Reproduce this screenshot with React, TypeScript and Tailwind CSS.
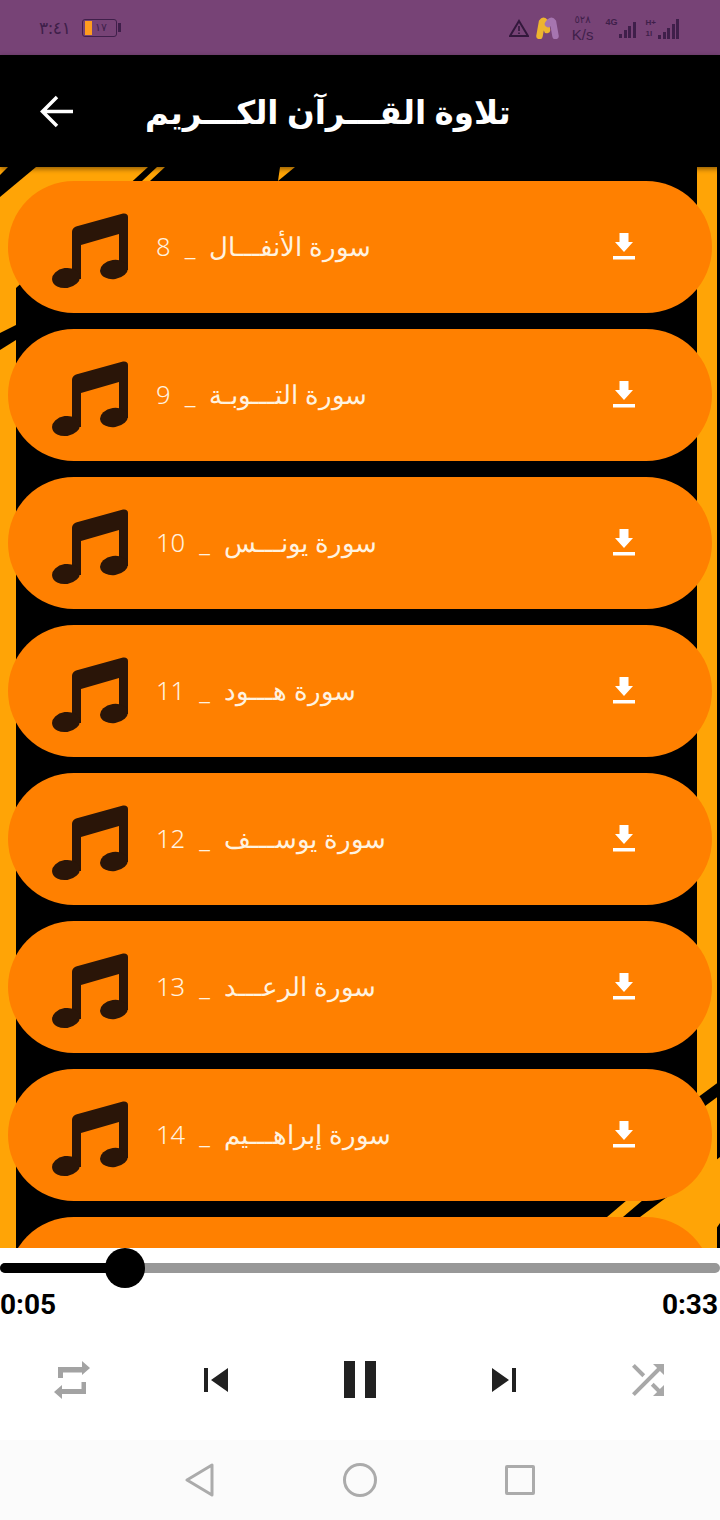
import React from 'react';

const arabicFont = "font-['Noto_Sans','Noto_Sans_CJK_SC','DejaVu_Sans',sans-serif]";

const tracks = [
  { name: 'سورة الأنفـــال', num: 8 },
  { name: 'سورة التـــوبـة', num: 9 },
  { name: 'سورة يونـــس', num: 10 },
  { name: 'سورة هـــود', num: 11 },
  { name: 'سورة يوســـف', num: 12 },
  { name: 'سورة الرعـــد', num: 13 },
  { name: 'سورة إبراهـــيم', num: 14 },
];

const NoteIcon = () => (
  <svg width="76" height="76" viewBox="0 0 76 76" fill="#2a1508" className="shrink-0 mt-[7px]">
    <path d="M20 19 Q20 15 24 13.5 L71 0.5 Q76 0 76 4 V57 H67 V21 L29 32 V66 H20 Z" />
    <ellipse cx="62" cy="56.5" rx="14" ry="9.5" transform="rotate(-8 62 56.5)" />
    <ellipse cx="14" cy="65" rx="14" ry="10" transform="rotate(-8 14 65)" />
  </svg>
);

const TrackRow = ({ name, num }: { name: string; num: number }) => (
  <div className="h-[132px] shrink-0 rounded-[66px] bg-[#ff8000] flex items-center pl-[44px] pr-[76px]">
    <NoteIcon />
    <div dir="rtl" className={`ml-[28px] flex-1 flex items-center text-[25.6px] text-[#fff3e0] ${arabicFont} font-light`}>
      <div dir="rtl" className="mr-auto whitespace-pre">
        <span>{name}</span>
        <span className="mx-[14px]">_</span>
        <span>{num}</span>
      </div>
    </div>
    <div className="w-[24px] flex flex-col items-center">
      <svg width="24" height="28" viewBox="0 0 24 28" fill="white">
        <path d="M7.5 0 H16.5 V9 H21 L12 19 L3 9 H7.5 Z" />
        <rect x="1" y="23" width="22" height="3.5" />
      </svg>
    </div>
  </div>
);

// artwork behind the list, drawn in page coordinates
const BackgroundArt = () => (
  <svg className="absolute inset-0 w-full h-full" viewBox="0 167 720 1081" preserveAspectRatio="none">
    <rect x="0" y="167" width="720" height="1081" fill="#000" />
    <rect x="0" y="167" width="16" height="1081" fill="#ffa406" />
    <rect x="697" y="167" width="20" height="1081" fill="#ffa406" />
    <path d="M0 167 H148 L16 288 H0 Z" fill="#ffa406" />
    <path d="M8 167 H36 L0 197 V175 Z" fill="#000" />
    <path d="M0 333 L16 325 V340 L0 350 Z" fill="#000" />
    <path d="M157 167 H165 L150 181 H142 Z" fill="#ffa406" />
    <path d="M280 167 H295 L278 181 Z" fill="#ffa406" />
    <path d="M697 1098 L720 1081 V1095 L697 1112 Z" fill="#000" />
    <path d="M720 1157 V1223 L703 1248 H640 V1217 L663 1200 L697 1175 Z" fill="#ffa406" />
    <path d="M627 1200 H643 L623 1217 H607 Z" fill="#ffa406" />
  </svg>
);

function Bars({ heights }: { heights: number[] }) {
  return (
    <div className="flex items-end gap-[1.5px] h-[20px]">
      {heights.map((h, i) => (
        <div key={i} className="w-[3px] bg-[#3f1f4a]" style={{ height: h }} />
      ))}
    </div>
  );
}

export default function App() {
  return (
    <div className="w-[720px] h-[1520px] flex flex-col bg-white overflow-hidden font-['Liberation_Sans',sans-serif]">
      {/* status bar */}
      <div className="h-[55px] shrink-0 bg-[#774376] flex items-center justify-between pl-[39px] pr-[41px] text-[#3f1f4a]">
        <div className="flex items-center gap-[11px]">
          <span className={`text-[17px] ${arabicFont}`}>٣:٤١</span>
          <div className="flex items-center gap-[1px]">
            <div className="w-[35px] h-[18px] border border-[#3f1f4a] rounded-[3px] flex items-center pl-[2px]">
              <div className="w-[7px] h-[14px] bg-[#ff9c1e]" />
              <span className="text-[11px] leading-none ml-[3px]">١٧</span>
            </div>
            <div className="w-[3px] h-[9px] bg-[#3f1f4a]" />
          </div>
        </div>
        <div className="flex items-center">
          <svg width="20" height="18" viewBox="0 0 20 18" fill="none" stroke="#33183c" strokeWidth="2">
            <path d="M10 2 L19 17 H1 Z" />
            <path d="M10 7 V12 M10 13.5 V15" strokeWidth="1.6" />
          </svg>
          <svg width="23" height="22" viewBox="0 0 23 22" className="ml-[7px] blur-[0.5px]" fill="none" strokeWidth="6.5" strokeLinecap="round">
            <path d="M3.5 19 L6 5 Q8 2 10 7 L11 13" stroke="#eeb52f" />
            <path d="M12 7 Q15 2 17 5 L19.5 19" stroke="#a675b0" />
          </svg>
          <div className="ml-[13px] w-[22px] flex flex-col items-center leading-none">
            <span className={`text-[10px] ${arabicFont}`}>٥٢٨</span>
            <span className="text-[15px] mt-[3px]">K/s</span>
          </div>
          <div className="ml-[12px] w-[30px] flex items-end justify-between">
            <span className="text-[9px] font-bold self-start mt-[-2px]">4G</span>
            <Bars heights={[4, 8, 12, 16]} />
          </div>
          <div className="ml-[10px] flex items-end gap-[2px]">
            <div className="flex flex-col text-[8px] font-bold leading-[11px]">
              <span>H+</span>
              <span>1l</span>
            </div>
            <Bars heights={[4, 7, 11, 15, 20]} />
          </div>
        </div>
      </div>

      {/* app bar */}
      <div className="relative z-10 h-[112px] shrink-0 bg-black flex items-center pl-[40px] text-white shadow-[0_2px_5px_rgba(0,0,0,0.45)]">
        <svg width="33" height="33" viewBox="0 0 33 33" fill="none" stroke="white" strokeWidth="3.5" className="shrink-0">
          <path d="M33 16.5 H3 M17 2 L2.5 16.5 L17 31" />
        </svg>
        <h1 dir="rtl" className={`ml-[72px] pt-[2px] text-[32.5px] font-bold whitespace-pre leading-none ${arabicFont}`}>تلاوة القـــرآن الكـــريم</h1>
      </div>

      {/* list */}
      <div className="relative flex-1 overflow-hidden">
        <BackgroundArt />
        <div className="relative flex flex-col gap-[16px] pt-[14px] px-[8px]">
          {tracks.map((t) => (
            <TrackRow key={t.num} name={t.name} num={t.num} />
          ))}
          <div className="h-[132px] shrink-0 rounded-[66px] bg-[#ff8000]" />
        </div>
      </div>

      {/* player */}
      <div className="h-[272px] shrink-0 flex flex-col bg-white">
        <div className="relative h-[40px] shrink-0 flex items-center">
          <div className="w-full h-[10px] rounded-full bg-[#989898]" />
          <div className="absolute left-0 w-[125px] h-[10px] rounded-full bg-black" />
          <div className="absolute left-[105px] w-[40px] h-[40px] rounded-full bg-black" />
        </div>
        <div className="flex justify-between pr-[2px] mt-[1px] text-[28px] font-bold leading-[32px] text-black font-['Roboto',sans-serif]">
          <span>0:05</span>
          <span>0:33</span>
        </div>
        <div className="mt-[35px] h-[48px] flex items-center justify-between px-[48px]">
          <svg width="48" height="48" viewBox="-6 -5 48 48" fill="#a3a3a3">
            <path d="M4 6 H28 V0 L36 7 L28 14 V11.5 H9 V17 H4 Z" />
            <path d="M32 33 H8 V38 L0 31 L8 24 V28 H27.5 V21 H32 Z" />
          </svg>
          <svg width="48" height="48" viewBox="0 0 24 24" fill="#212121"><path d="M6 6h2v12H6zm3.5 6l8.5 6V6z" /></svg>
          <svg width="48" height="48" viewBox="-8 -5 48 48" fill="#212121">
            <rect x="0" y="0" width="11" height="37" />
            <rect x="21" y="0" width="11" height="37" />
          </svg>
          <svg width="48" height="48" viewBox="0 0 24 24" fill="#212121"><path d="M6 18l8.5-6L6 6v12zM16 6v12h2V6h-2z" /></svg>
          <svg width="48" height="48" viewBox="0 0 24 24" fill="#a8a8a8"><path d="M10.59 9.17L5.41 4 4 5.41l5.17 5.17 1.42-1.41zM14.5 4l2.04 2.04L4 18.59 5.41 20 17.96 7.46 20 9.5V4h-5.5zm.33 9.41l-1.41 1.41 3.13 3.13L14.5 20H20v-5.5l-2.04 2.04-3.13-3.13z" /></svg>
        </div>
        {/* nav bar */}
        <div className="mt-auto h-[80px] shrink-0 bg-[#fbfbfb] flex items-center pl-[184px]">
          <svg width="32" height="34" viewBox="0 0 32 34" fill="none" stroke="#ababab" strokeWidth="3" strokeLinejoin="round"><path d="M28 2 V32 L3 17 Z" /></svg>
          <div className="ml-[127px] w-[34px] h-[34px] rounded-full border-[3px] border-[#ababab]" />
          <div className="ml-[128px] w-[30px] h-[30px] rounded-[2px] border-[3px] border-[#ababab]" />
        </div>
      </div>
    </div>
  );
}
